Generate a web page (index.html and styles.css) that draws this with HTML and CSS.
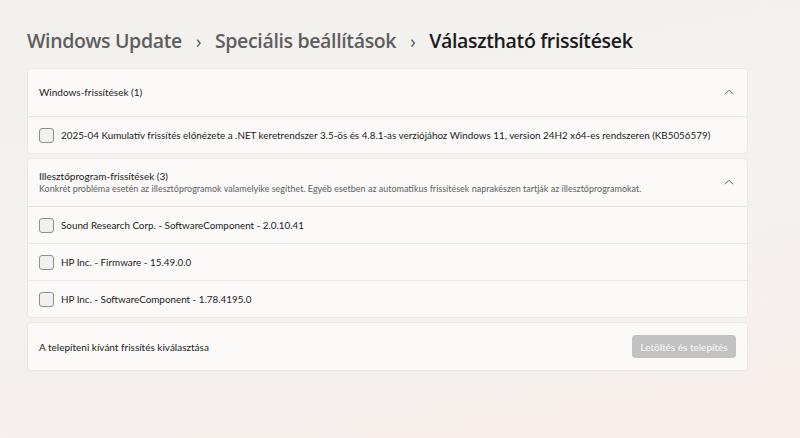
FILE: index.html
```html
<!DOCTYPE html>
<html lang="hu">
<head>
<meta charset="utf-8">
<link rel="stylesheet" href="styles.css">
</head>
<body>
<div class="page">
  <h1 class="crumbs">
    <span class="crumb">Windows Update</span>
    <span class="sep">›</span>
    <span class="crumb">Speciális beállítások</span>
    <span class="sep">›</span>
    <span class="crumb current">Választható frissítések</span>
  </h1>

  <section class="card">
    <div class="card-head">
      <div class="head-text">
        <div class="head-title">Windows-frissítések (1)</div>
      </div>
      <svg class="chev" viewBox="0 0 10 6" width="10" height="6"><path d="M1 5.2 L5 1.2 L9 5.2" fill="none" stroke="#5a5a5a" stroke-width="1"/></svg>
    </div>
    <label class="row"><span class="box"></span><span>2025-04 Kumulatív frissítés előnézete a .NET keretrendszer 3.5-ös és 4.8.1-as verziójához Windows 11, version 24H2 x64-es rendszeren (KB5056579)</span></label>
  </section>

  <section class="card">
    <div class="card-head">
      <div class="head-text">
        <div class="head-title">Illesztőprogram-frissítések (3)</div>
        <div class="head-sub">Konkrét probléma esetén az illesztőprogramok valamelyike segíthet. Egyéb esetben az automatikus frissítések naprakészen tartják az illesztőprogramokat.</div>
      </div>
      <svg class="chev" viewBox="0 0 10 6" width="10" height="6"><path d="M1 5.2 L5 1.2 L9 5.2" fill="none" stroke="#5a5a5a" stroke-width="1"/></svg>
    </div>
    <label class="row"><span class="box"></span><span>Sound Research Corp. - SoftwareComponent - 2.0.10.41</span></label>
    <label class="row"><span class="box"></span><span>HP Inc. - Firmware - 15.49.0.0</span></label>
    <label class="row"><span class="box"></span><span>HP Inc. - SoftwareComponent - 1.78.4195.0</span></label>
  </section>

  <section class="card footer">
    <span>A telepíteni kívánt frissítés kiválasztása</span>
    <button class="btn" disabled>Letöltés és telepítés</button>
  </section>
</div>
</body>
</html>
```

FILE: styles.css
```css
html, body {
  margin: 0;
  height: 100%;
}
body {
  background: linear-gradient(170deg, #f3f1ee 0%, #f4f1ef 50%, #f7efec 100%);
  font-family: "Lato", "Noto Sans", sans-serif;
  color: #1b1b1b;
  overflow: hidden;
}
.page {
  padding: 26px 52px 0 27px;
  display: flex;
  flex-direction: column;
}
.crumbs {
  margin: 0 0 12px 0;
  display: flex;
  align-items: center;
  gap: 14px;
  font-family: "Open Sans", sans-serif;
  font-size: 19.5px;
  font-weight: 600;
  line-height: 30px;
  letter-spacing: -0.35px;
  color: #5e5e5e;
}
.sep {
  font-size: 18px;
  font-weight: 400;
  color: #555;
}
.crumb.current {
  color: #1a1a1a;
}
.card {
  background: #fbfaf9;
  border: 1px solid #ebe8e6;
  border-radius: 4px;
  margin-bottom: 4px;
  display: flex;
  flex-direction: column;
}
.card-head {
  height: 47px;
  display: flex;
  align-items: center;
  justify-content: space-between;
  padding: 0 13px 0 11px;
  border-bottom: 1px solid #e6e3e1;
}
.head-title {
  font-size: 10px;
  line-height: 13px;
  color: #1b1b1b;
}
.head-sub {
  font-size: 9px;
  line-height: 12px;
  color: #616161;
}
.chev {
  display: block;
  margin-top: -2px;
}
.row {
  height: 36px;
  display: flex;
  align-items: center;
  gap: 7px;
  padding: 0 11px;
  font-size: 9.85px;
  color: #1b1b1b;
  border-bottom: 1px solid #eeebe9;
  white-space: nowrap;
}
.row:last-child {
  border-bottom: none;
}
.box {
  width: 13px;
  height: 13px;
  border: 1px solid #8f8f8f;
  border-radius: 3px;
  background: #f2f0ef;
  flex: none;
}
.footer {
  height: 47px;
  flex-direction: row;
  align-items: center;
  justify-content: space-between;
  padding: 0 11px 0 11px;
  font-size: 10px;
}
.btn {
  font-family: inherit;
  font-size: 10px;
  color: #fbfbfb;
  background: #c2c2c2;
  border: none;
  border-radius: 4px;
  height: 23px;
  width: 104px;
  padding: 0;
}
```
